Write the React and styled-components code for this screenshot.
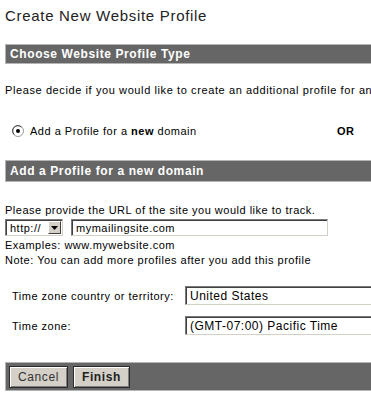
import React from "react";
import styled, { createGlobalStyle } from "styled-components";

const GlobalStyle = createGlobalStyle`
  html, body {
    margin: 0;
    padding: 0;
    background: #ffffff;
    overflow: hidden;
  }
  body {
    font-family: "Liberation Sans", Arial, sans-serif;
    color: #000000;
  }
`;

const Page = styled.div`
  width: 720px;
  padding: 7px 0 0 5px;
`;

const Title = styled.h1`
  margin: 0;
  font-size: 15px;
  line-height: 18px;
  font-weight: normal;
  letter-spacing: 0.7px;
  color: #222222;
`;

const SectionBar = styled.div`
  margin-top: ${(p) => p.$top}px;
  height: ${(p) => p.$height}px;
  display: flex;
  align-items: center;
  padding-left: 4px;
  background: #666666;
  border: 1px solid #b4b4b4;
  color: #ffffff;
  font-size: 12px;
  font-weight: bold;
  letter-spacing: 0.6px;
`;

const Text = styled.p`
  margin: ${(p) => p.$top || 0}px 0 0 0;
  font-size: 11px;
  line-height: ${(p) => p.$lh || 14}px;
  letter-spacing: ${(p) => p.$ls || 0.5}px;
  white-space: nowrap;
`;

const ChoiceRow = styled.div`
  margin-top: 27px;
  display: grid;
  grid-template-columns: 332px auto;
  align-items: center;
  font-size: 11px;
  line-height: 14px;
  letter-spacing: 0.5px;
`;

const Choice = styled.label`
  display: flex;
  align-items: center;
  gap: 6px;
  padding-left: 7px;
  b {
    font-weight: bold;
  }
`;

const Or = styled.span`
  font-weight: bold;
`;

const UrlRow = styled.div`
  margin-top: 2px;
  display: flex;
  align-items: center;
  gap: 8px;
`;

const SelectBox = styled.div`
  width: 52px;
  height: 15px;
  display: flex;
  align-items: center;
  justify-content: space-between;
  padding-left: 4px;
  background: #ffffff;
  border: 1px solid;
  border-color: #7a7a7a #d4d0c8 #d4d0c8 #7a7a7a;
  box-shadow: inset 1px 1px 0 #404040;
  font-size: 11px;
  letter-spacing: 0.5px;
`;

const DropButton = styled.span`
  width: 13px;
  height: 13px;
  margin-right: 1px;
  display: flex;
  align-items: center;
  justify-content: center;
  background: #d4d0c8;
  border: 1px solid;
  border-color: #ffffff #404040 #404040 #ffffff;
  box-sizing: border-box;
`;

const Field = styled.div`
  width: ${(p) => p.$width}px;
  height: ${(p) => p.$height || 15}px;
  display: flex;
  align-items: center;
  padding-left: 4px;
  background: #ffffff;
  border: 1px solid;
  border-color: #7a7a7a #d4d0c8 #d4d0c8 #7a7a7a;
  box-shadow: inset 1px 1px 0 #404040;
  font-size: ${(p) => p.$size || 11}px;
  letter-spacing: 0.5px;
  white-space: nowrap;
`;

const ZoneTable = styled.div`
  margin-top: 18px;
  padding-left: 7px;
  display: grid;
  grid-template-columns: 173px auto;
  row-gap: 11px;
  align-items: center;
  font-size: 11px;
  letter-spacing: 0.5px;
`;

const Footer = styled.div`
  margin-top: 27px;
  height: 23px;
  padding: 2px 3px;
  display: flex;
  align-items: center;
  gap: 5px;
  background: #666666;
  border: 1px solid #b4b4b4;
`;

const Button = styled.button`
  height: 22px;
  padding: 0 ${(p) => p.$pad}px;
  background: #d4d0c8;
  border: 1px solid #2a2a2a;
  box-shadow: inset 1px 1px 0 #ffffff, inset -1px -1px 0 #808080;
  font-family: "Liberation Sans", Arial, sans-serif;
  font-size: 12px;
  letter-spacing: 0.6px;
  font-weight: ${(p) => (p.$primary ? "bold" : "normal")};
  color: ${(p) => (p.$primary ? "#222222" : "#333333")};
`;

const Radio = () => (
  <svg width="12" height="12" viewBox="0 0 12 12">
    <circle cx="6" cy="6" r="5.5" fill="#ffffff" stroke="#9a9a9a" />
    <path d="M2.2 9.5 A5 5 0 0 1 9.5 2.2" fill="none" stroke="#404040" />
    <circle cx="6" cy="6" r="2" fill="#000000" />
  </svg>
);

const Caret = () => (
  <svg width="7" height="4" viewBox="0 0 7 4">
    <path d="M0 0 H7 L3.5 4 Z" fill="#000000" />
  </svg>
);

const App = () => {
  return (
    <>
      <GlobalStyle />
      <Page>
        <Title>Create New Website Profile</Title>

        <SectionBar $top={19} $height={18}>
          Choose Website Profile Type
        </SectionBar>
        <Text $top={19} $ls={0.6}>
          Please decide if you would like to create an additional profile for an
        </Text>
        <ChoiceRow>
          <Choice>
            <Radio />
            <span>
              Add a Profile for a <b>new</b> domain
            </span>
          </Choice>
          <Or>OR</Or>
        </ChoiceRow>

        <SectionBar $top={22} $height={20}>
          Add a Profile for a new domain
        </SectionBar>
        <Text $top={21}>Please provide the URL of the site you would like to track.</Text>
        <UrlRow>
          <SelectBox>
            <span>http://</span>
            <DropButton>
              <Caret />
            </DropButton>
          </SelectBox>
          <Field $width={251}>mymailingsite.com</Field>
        </UrlRow>
        <Text $top={2} $lh={15}>Examples: www.mywebsite.com</Text>
        <Text $lh={15}>Note: You can add more profiles after you add this profile</Text>

        <ZoneTable>
          <span>Time zone country or territory:</span>
          <Field $width={300} $height={17} $size={12}>
            United States
          </Field>
          <span>Time zone:</span>
          <Field $width={300} $height={17} $size={12}>
            (GMT-07:00) Pacific Time
          </Field>
        </ZoneTable>

        <Footer>
          <Button $pad={8}>Cancel</Button>
          <Button $pad={8} $primary>
            Finish
          </Button>
        </Footer>
      </Page>
    </>
  );
};

export default App;
